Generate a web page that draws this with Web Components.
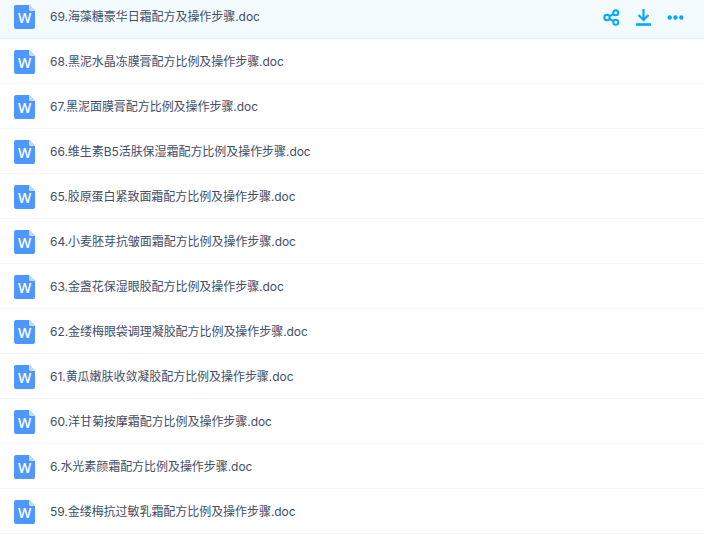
<!DOCTYPE html>
<html lang="zh">
<head>
<meta charset="utf-8">
<title>文件列表</title>
<style>
  html, body { margin: 0; height: 100%; background: #fff; overflow: hidden; }
  body { font-family: Inter, "Noto Sans CJK SC", sans-serif; }
</style>
</head>
<body>
<file-list>
  <file-row name="69.海藻糖豪华日霜配方及操作步骤.doc" active></file-row>
  <file-row name="68.黑泥水晶冻膜膏配方比例及操作步骤.doc"></file-row>
  <file-row name="67.黑泥面膜膏配方比例及操作步骤.doc"></file-row>
  <file-row name="66.维生素B5活肤保湿霜配方比例及操作步骤.doc"></file-row>
  <file-row name="65.胶原蛋白紧致面霜配方比例及操作步骤.doc"></file-row>
  <file-row name="64.小麦胚芽抗皱面霜配方比例及操作步骤.doc"></file-row>
  <file-row name="63.金盏花保湿眼胶配方比例及操作步骤.doc"></file-row>
  <file-row name="62.金缕梅眼袋调理凝胶配方比例及操作步骤.doc"></file-row>
  <file-row name="61.黄瓜嫩肤收敛凝胶配方比例及操作步骤.doc"></file-row>
  <file-row name="60.洋甘菊按摩霜配方比例及操作步骤.doc"></file-row>
  <file-row name="6.水光素颜霜配方比例及操作步骤.doc"></file-row>
  <file-row name="59.金缕梅抗过敏乳霜配方比例及操作步骤.doc"></file-row>
</file-list>
<script>
const list_template = document.createElement('template');
list_template.innerHTML = `
  <style>
    :host { display: block; margin-top: -6px; }
  </style>
  <slot></slot>
`;

class FileList extends HTMLElement {
  constructor() {
    super();
    this.attachShadow({mode: 'open'});
    this.shadowRoot.appendChild(list_template.content.cloneNode(true));
  }
}

const row_template = document.createElement('template');
row_template.innerHTML = `
  <style>
    :host {
      display: flex;
      align-items: center;
      box-sizing: border-box;
      height: 45px;
      padding: 2px 14px 0;
      border-bottom: 1px solid #f4f6fa;
      font-size: 12px;
      letter-spacing: -0.05px;
      color: #424e67;
    }
    :host([active]) {
      background: #f4fbff;
      border-bottom-color: #e0f0fb;
    }
    .doc { width: 21px; height: 24px; flex: none; display: block; }
    .name { margin-left: 15px; flex: 1; white-space: nowrap; position: relative; top: -2px; }
    .actions { display: none; align-items: center; gap: 15px; margin-right: 6px; color: #06a7ff; }
    :host([active]) .actions { display: flex; }
    .actions svg { width: 17px; height: 17px; display: block; }
  </style>
  <svg class="doc" viewBox="0 0 21 24">
    <path d="M2 0H15L21 6V22a2 2 0 0 1-2 2H2a2 2 0 0 1-2-2V2a2 2 0 0 1 2-2z" fill="#4d97ff"/>
    <path d="M15 0L21 6H16.500a1.500 1.500 0 0 1-1.500-1.500z" fill="#c4dcff"/>
    <text x="10.500" y="17.500" text-anchor="middle" fill="#fff" font-family="Open Sans, sans-serif" font-size="14" font-weight="600">W</text>
  </svg>
  <span class="name"></span>
  <div class="actions">
    <svg viewBox="0 0 17 17" fill="none" stroke="currentColor" stroke-width="2">
      <circle cx="4" cy="8.500" r="2.700"/>
      <circle cx="12.800" cy="3.800" r="2.500"/>
      <circle cx="12.800" cy="13.200" r="2.500"/>
      <path d="M6.400 7.200L10.600 5M6.400 9.800L10.600 12"/>
    </svg>
    <svg viewBox="0 0 17 17" fill="none" stroke="currentColor" stroke-width="2.200">
      <path d="M8.500 0V11M3.500 6L8.500 11L13.500 6"/>
      <path d="M1 15.500H16" stroke-width="2.600"/>
    </svg>
    <svg viewBox="0 0 17 17" fill="currentColor">
      <circle cx="2.700" cy="8.500" r="2.200"/>
      <circle cx="8.500" cy="8.500" r="2.200"/>
      <circle cx="14.300" cy="8.500" r="2.200"/>
    </svg>
  </div>
`;

class FileRow extends HTMLElement {
  constructor() {
    super();
    this.attachShadow({mode: 'open'});
    this.shadowRoot.appendChild(row_template.content.cloneNode(true));
    this.shadowRoot.querySelector('.name').textContent = this.getAttribute('name');
  }
}

window.customElements.define('file-list', FileList);
window.customElements.define('file-row', FileRow);
</script>
</body>
</html>
